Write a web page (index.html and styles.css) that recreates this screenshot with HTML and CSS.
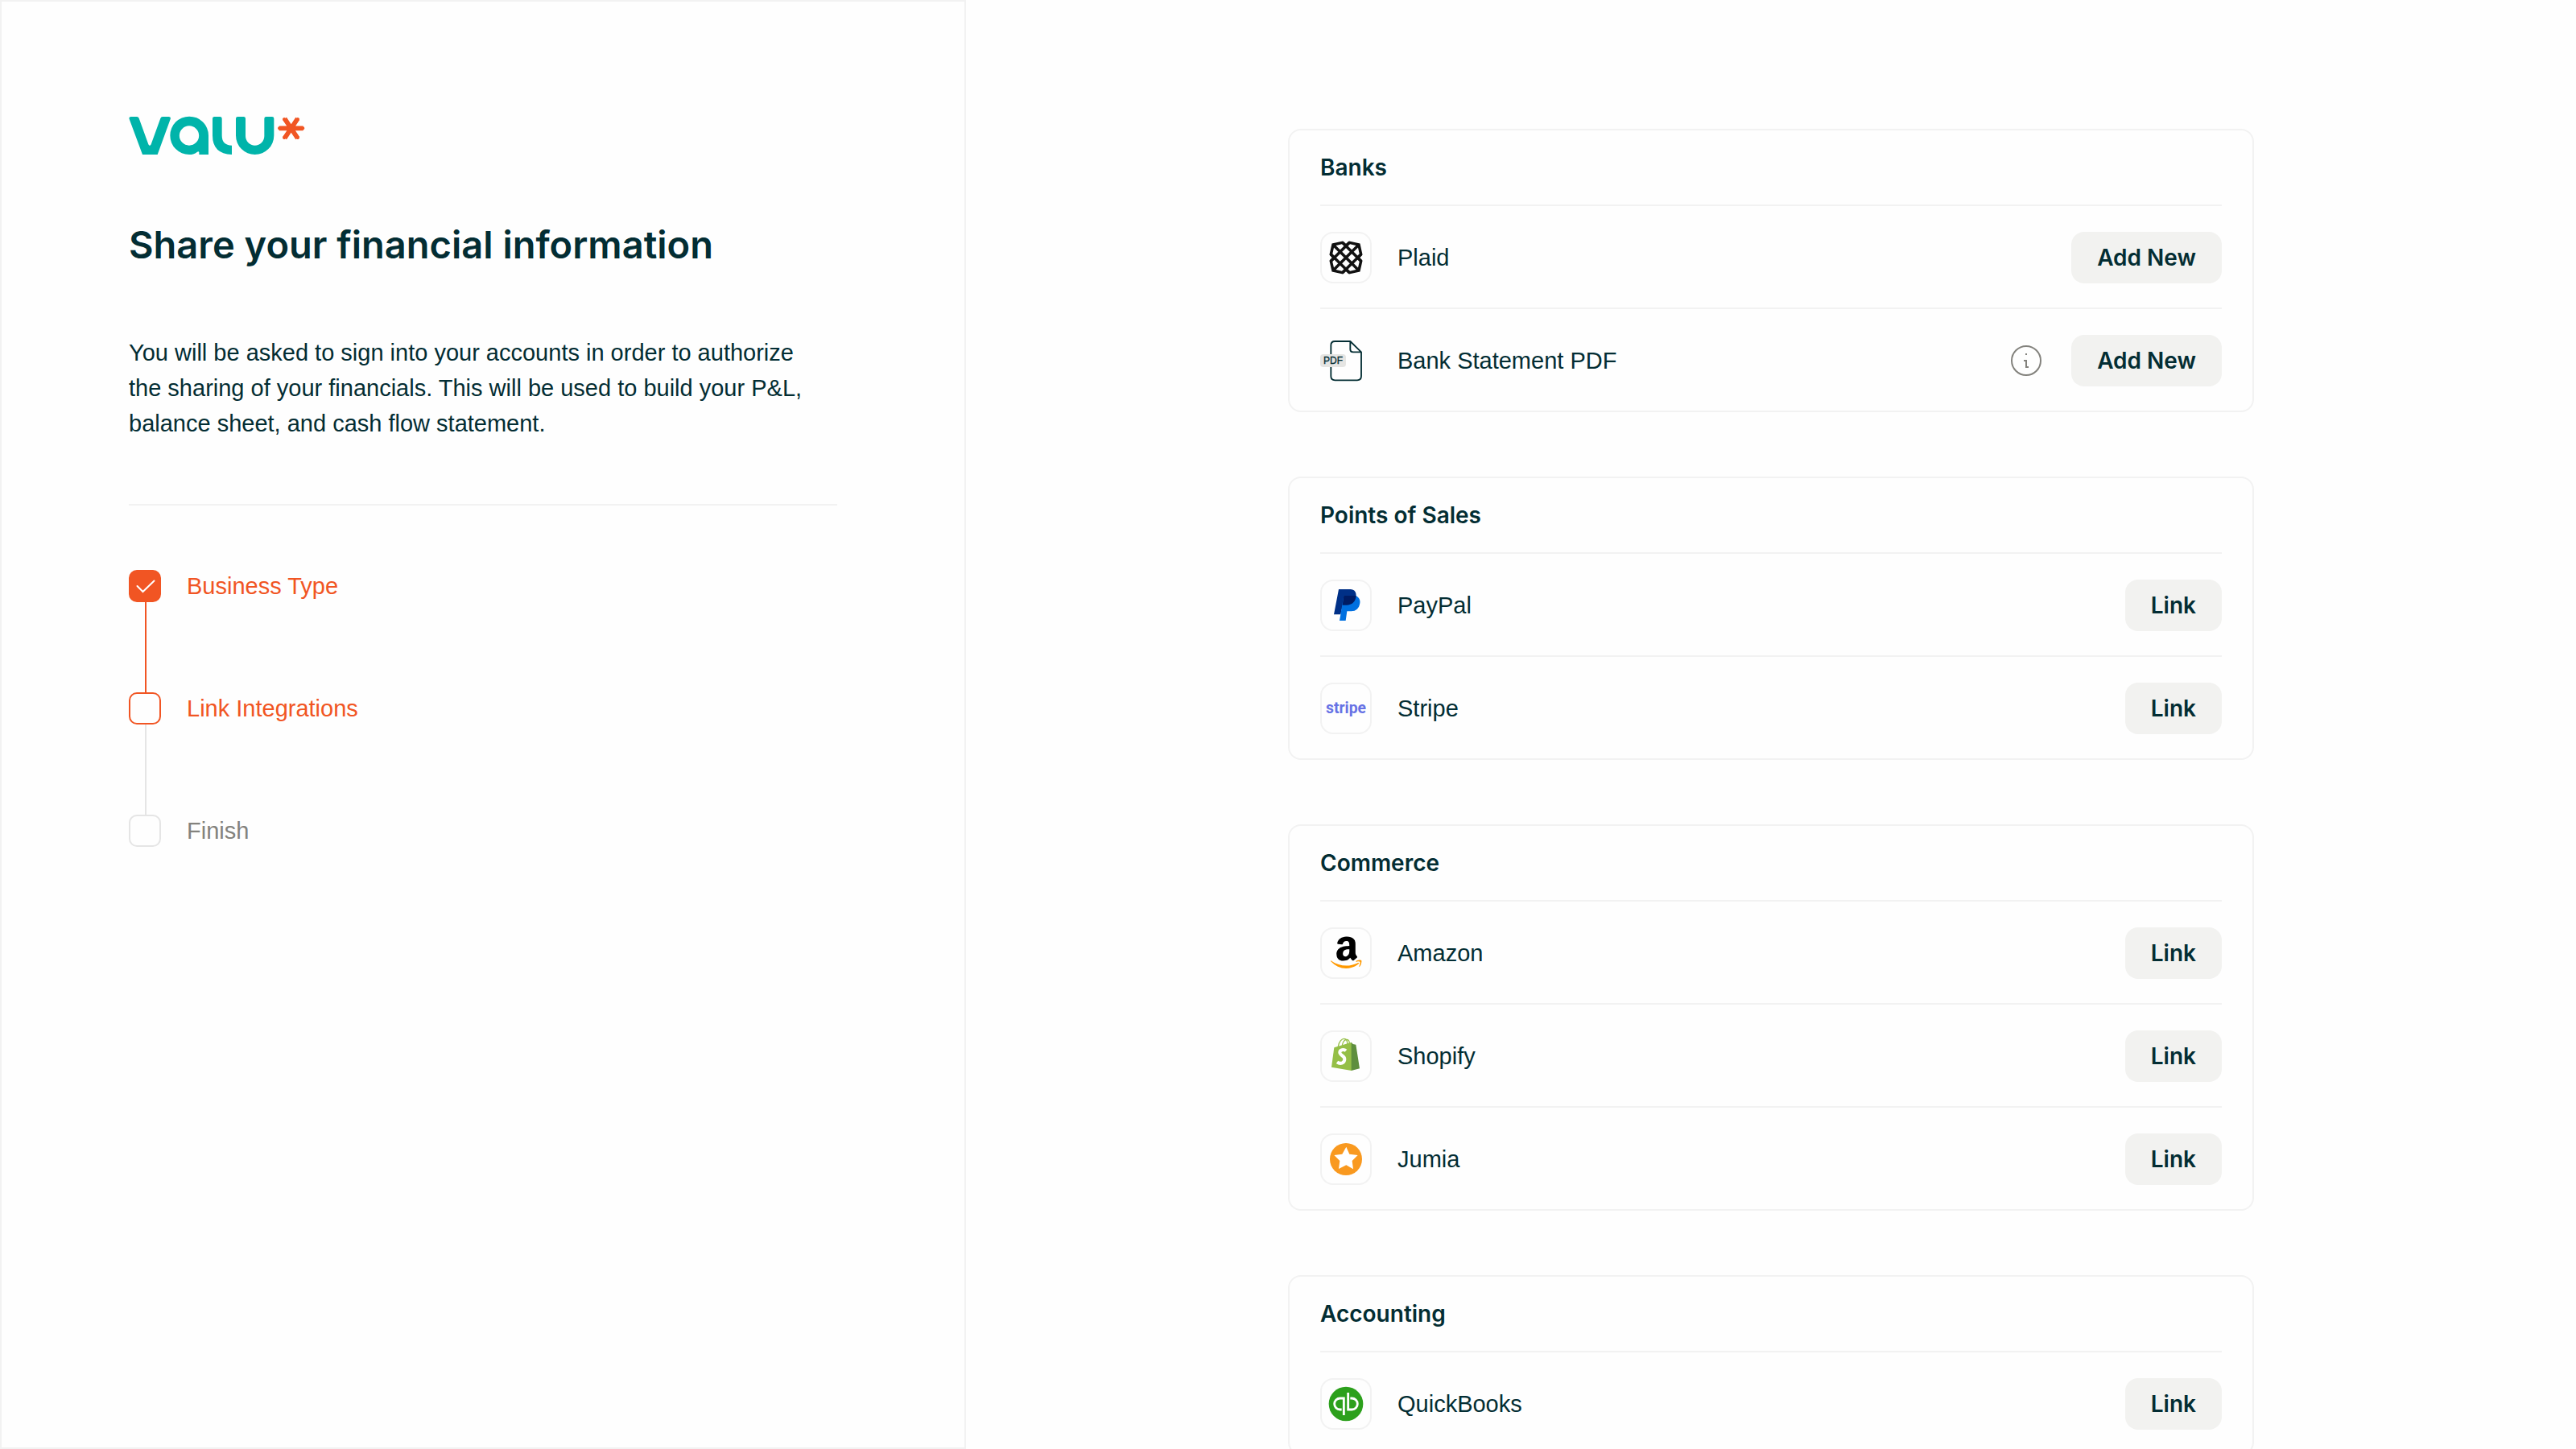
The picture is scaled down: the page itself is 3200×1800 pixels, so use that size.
FILE: index.html
```html
<!DOCTYPE html>
<html lang="en">
<head>
<meta charset="utf-8">
<title>Valu – Share your financial information</title>
<meta name="viewport" content="width=device-width, initial-scale=1">
<link rel="stylesheet" href="styles.css">
</head>
<body>
<div class="layout">
  <aside class="intro">
    <svg class="logo" viewBox="60 72 660 144" role="img" aria-label="Valu">
      <g fill="#00b4aa">
        <path d="M68 75H90Q96 75 98 81L133 178Q138 187 143 178L178 81Q180 75 186 75H209Q218 75 215 84L167 216H111L62 84Q59 75 68 75Z"/>
        <path fill-rule="evenodd" d="M285 74A71 71 0 0 1 357 145V216H322V208Q321 202 315 206Q304 216 285 216A71 71 0 0 1 285 74ZM285 109A36 36 0 0 0 285 182A36 36 0 0 0 285 109Z"/>
        <path d="M372 82Q372 75 379 75H400Q407 75 407 82V145Q407 182 444 182V216Q372 214 372 145Z"/>
        <path d="M459 82Q459 75 466 75H488Q495 75 495 82V147A35 35 0 0 0 565 147V82Q565 75 572 75H594Q601 75 601 82V145A71 71 0 0 1 459 145Z"/>
      </g>
      <g stroke="#f15523" stroke-width="17">
        <path d="M620 118H710M641 82L689 155M689 82L641 155" stroke-linecap="butt"/>
        <path d="M621 118H709M639 84L690 153M690 84L639 153" stroke-width="12" stroke-linecap="round"/>
      </g>
    </svg>
    <h1 class="title">Share your financial information</h1>
    <p class="lead">You will be asked to sign into your accounts in order to authorize the sharing of your financials. This will be used to build your P&amp;L, balance sheet, and cash flow statement.</p>
    <ol class="steps">
      <li class="step step-done">
        <input class="step-box" type="checkbox" id="step-type" checked>
        <label class="step-label" for="step-type">Business Type</label>
      </li>
      <li class="step step-current">
        <input class="step-box" type="checkbox" id="step-link">
        <label class="step-label" for="step-link">Link Integrations</label>
      </li>
      <li class="step">
        <input class="step-box" type="checkbox" id="step-finish">
        <label class="step-label" for="step-finish">Finish</label>
      </li>
    </ol>
  </aside>

  <main class="content">
    <section class="card">
      <h2 class="card-title">Banks</h2>
      <ul class="rows">
        <li class="row">
          <svg class="tile" viewBox="6 6 180 180" aria-hidden="true">
            <g fill="none" stroke="#111" stroke-width="10.5">
              <path d="M48 48L83 40L96 52L109 40L144 48L152 84L140 96L152 109L144 144L109 152L96 140L83 152L48 144L40 109L52 96L40 84Z"/>
              <path d="M48 48L144 144M144 48L48 144M83 40L152 109M109 40L40 109M40 84L109 152M152 84L83 152"/>
            </g>
          </svg>
          <span class="name">Plaid</span>
          <button class="btn" type="button">Add New</button>
        </li>
        <li class="row">
          <svg class="tile tile-plain" viewBox="0 0 192 192" aria-hidden="true">
            <path d="M112 24H55Q40 24 40 39V154Q40 169 55 169H138Q153 169 153 154V64ZM112 24V54Q112 64 122 64H153" fill="none" stroke="#032d33" stroke-width="5.5" stroke-linejoin="round"/>
            <rect x="0" y="72" width="96" height="48" rx="12" fill="#e5e5e3"/>
            <text class="pdf-text" x="12" y="109">PDF</text>
          </svg>
          <span class="name">Bank Statement PDF</span>
          <button class="info" type="button" aria-label="About bank statement PDFs">
            <svg viewBox="0 0 48 48" width="48" height="48" aria-hidden="true">
              <circle cx="24" cy="24" r="18" fill="none" stroke="#83827d" stroke-width="2"/>
              <path d="M23 15h2v2h-2zM21 23h4v8h2v2h-4v-8h-2z" fill="#83827d"/>
            </svg>
          </button>
          <button class="btn" type="button">Add New</button>
        </li>
      </ul>
    </section>

    <section class="card">
      <h2 class="card-title">Points of Sales</h2>
      <ul class="rows">
        <li class="row">
          <svg class="tile" viewBox="6 6 180 180" aria-hidden="true">
            <path d="M69 36H112C128 36 137 48 133 66C129 85 117 95 98 95H84L76 130H51Z" fill="#003087"/>
            <path d="M88 60H133C145 67 150 75 148 88C145 108 133 118 116 118H100L95 153H72Z" fill="#0070e0"/>
            <path d="M88 60H134C132 82 119 95 98 95H83Z" fill="#001c64"/>
          </svg>
          <span class="name">PayPal</span>
          <button class="btn" type="button">Link</button>
        </li>
        <li class="row">
          <svg class="tile" viewBox="6 6 180 180" aria-hidden="true">
            <text class="stripe-text" x="96" y="115" text-anchor="middle">stripe</text>
          </svg>
          <span class="name">Stripe</span>
          <button class="btn" type="button">Link</button>
        </li>
      </ul>
    </section>

    <section class="card">
      <h2 class="card-title">Commerce</h2>
      <ul class="rows">
        <li class="row">
          <svg class="tile" viewBox="6 6 180 180" aria-hidden="true">
            <path transform="translate(19 28) scale(6.3 6.1)" fill="#000" d="M6.61 11.802c0-1.005.247-1.863.743-2.577.495-.71 1.17-1.25 2.04-1.615.796-.335 1.756-.575 2.912-.72.39-.046 1.033-.103 1.92-.174v-.37c0-.93-.105-1.558-.3-1.875-.302-.43-.78-.65-1.44-.65h-.182c-.48.046-.896.196-1.246.46-.35.27-.575.63-.675 1.096-.06.3-.206.465-.435.51l-2.52-.315c-.248-.06-.372-.18-.372-.39 0-.046.007-.09.022-.15.247-1.29.855-2.25 1.82-2.88.976-.616 2.1-.975 3.39-1.05h.54c1.65 0 2.957.434 3.888 1.29.135.15.27.3.405.48.12.165.224.314.283.45.075.134.15.33.195.57.06.254.105.42.135.51.03.104.062.3.076.615.01.313.02.493.02.553v5.28c0 .376.06.72.165 1.036.105.313.21.54.315.674l.51.674c.09.136.136.256.136.36 0 .12-.06.226-.18.314-1.2 1.05-1.86 1.62-1.963 1.71-.165.135-.375.15-.63.045a6.062 6.062 0 01-.526-.496l-.31-.347a9.391 9.391 0 01-.317-.42l-.3-.435c-.81.886-1.603 1.44-2.4 1.665-.494.15-1.093.227-1.83.227-1.11 0-2.04-.343-2.76-1.034-.72-.69-1.08-1.665-1.08-2.94zm3.753-.438c0 .566.14 1.02.425 1.364.285.34.675.512 1.155.512.045 0 .106-.007.195-.02.09-.016.134-.023.166-.023.614-.16 1.08-.553 1.424-1.178.165-.28.285-.58.36-.91.09-.32.12-.59.135-.8.015-.195.015-.54.015-1.005v-.54c-.84 0-1.484.06-1.92.18-1.275.36-1.92 1.17-1.92 2.43z"/>
            <path transform="translate(39 20) scale(4.8 5.8)" fill="#f90" d="M.045 18.02c.072-.116.187-.124.348-.022 3.636 2.11 7.594 3.166 11.87 3.166 2.852 0 5.668-.533 8.447-1.595l.315-.14c.138-.06.234-.1.293-.13.226-.088.39-.046.525.13.12.174.09.336-.12.48-.256.19-.6.41-1.006.654-1.244.743-2.64 1.316-4.185 1.726a17.617 17.617 0 01-10.951-.577 17.88 17.88 0 01-5.43-3.35c-.1-.074-.151-.15-.151-.22 0-.047.021-.09.051-.13zM19.525 18.391c.03-.06.075-.11.132-.17.362-.243.714-.41 1.05-.5a8.094 8.094 0 011.612-.24c.14-.012.28 0 .41.03.65.06 1.05.168 1.172.33.063.09.099.228.099.39v.15c0 .51-.149 1.11-.424 1.8-.278.69-.664 1.248-1.156 1.68-.073.06-.14.09-.197.09-.03 0-.06 0-.09-.012-.09-.044-.107-.12-.064-.24.54-1.26.806-2.143.806-2.64 0-.15-.03-.27-.087-.344-.145-.166-.55-.257-1.224-.257-.243 0-.533.016-.87.046-.363.045-.7.09-1 .135-.09 0-.148-.014-.18-.044z"/>
          </svg>
          <span class="name">Amazon</span>
          <button class="btn" type="button">Link</button>
        </li>
        <li class="row">
          <svg class="tile" viewBox="6 6 180 180" aria-hidden="true">
            <path d="M67 60C70 42 80 31 89 31C98 31 102 40 101 52M82 56C84 42 92 33 100 34C107 35 109 41 109 49" fill="none" stroke="#95bf47" stroke-width="4"/>
            <path d="M52 64L117 44V150L42 137Z" fill="#95bf47"/>
            <path d="M116 44L122 51L133 53L147 142L116 150Z" fill="#5e8e3e"/>
            <path d="M96 76C88 69 73 72 73 82C73 94 92 94 91 108C90 122 75 127 63 118" fill="none" stroke="#fff" stroke-width="12"/>
          </svg>
          <span class="name">Shopify</span>
          <button class="btn" type="button">Link</button>
        </li>
        <li class="row">
          <svg class="tile" viewBox="6 6 180 180" aria-hidden="true">
            <circle cx="96" cy="96" r="60" fill="#f9991f"/>
            <path d="M97 50L109 77L140 81L119 102L123 133L97 118L69 132L73 102L52 81L82 77Z" fill="#fff"/>
          </svg>
          <span class="name">Jumia</span>
          <button class="btn" type="button">Link</button>
        </li>
      </ul>
    </section>

    <section class="card">
      <h2 class="card-title">Accounting</h2>
      <ul class="rows">
        <li class="row">
          <svg class="tile" viewBox="6 6 180 180" aria-hidden="true">
            <circle cx="96" cy="96" r="64" fill="#2ca01c"/>
            <path d="M80 117H74A21 21 0 0 1 74 75H88V138M112 75H118A21 21 0 0 1 118 117H104V54" fill="none" stroke="#fff" stroke-width="8.5"/>
          </svg>
          <span class="name">QuickBooks</span>
          <button class="btn" type="button">Link</button>
        </li>
      </ul>
    </section>
  </main>
</div>
</body>
</html>
```
FILE: styles.css
```css
:root {
  --ink: #032d33;
  --muted: #83827d;
  --line: #f2f2f2;
  --box-line: #e5e5e5;
  --accent: #f15523;
  --font: "Liberation Sans", Arial, sans-serif;
  --font-strong: Inter, "Liberation Sans", sans-serif;
}

* {
  box-sizing: border-box;
}

body {
  margin: 0;
  background: #fefefe;
  color: var(--ink);
  font-family: var(--font);
  font-size: 29px;
  line-height: 44px;
}

.layout {
  display: grid;
  grid-template-columns: 3fr 5fr;
  height: 100vh;
}

/* Left panel */
.intro {
  padding: 142px 158px;
  border: 2px solid var(--line);
}

.logo {
  display: block;
  width: 220px;
  height: 48px;
}

.title {
  margin: 80px 0 0;
  font-family: var(--font-strong);
  font-size: 47px;
  font-weight: 600;
  line-height: 64px;
}

.lead {
  margin: 80px 0 0;
  padding: 0 32px 78px 0;
  border-bottom: 2px solid var(--line);
}

.steps {
  display: flex;
  flex-direction: column;
  gap: 112px;
  margin: 80px 0 0;
  padding: 0;
  list-style: none;
}

.step {
  position: relative;
  display: flex;
  align-items: center;
  gap: 32px;
  height: 40px;
  color: var(--muted);
}

.step-done,
.step-current {
  color: var(--accent);
}

/* Connector down to the next step */
.step:not(:last-child)::after {
  content: "";
  position: absolute;
  top: 100%;
  left: 20px;
  width: 2px;
  height: 112px;
  background: var(--box-line);
}

.step-done:not(:last-child)::after {
  background: var(--accent);
}

.step-box {
  appearance: none;
  width: 40px;
  height: 40px;
  margin: 0;
  border: 2px solid var(--box-line);
  border-radius: 10px;
}

.step-current .step-box {
  border-color: var(--accent);
}

.step-box:checked {
  border-color: var(--accent);
  background: var(--accent) url("data:image/svg+xml,%3Csvg xmlns='http://www.w3.org/2000/svg' viewBox='0 0 36 36'%3E%3Cpath d='M8.500 18L15.500 25L29.500 11.500' fill='none' stroke='white' stroke-width='2' stroke-linecap='round'/%3E%3C/svg%3E") center / 36px no-repeat;
}

/* Integrations */
.content {
  display: flex;
  flex-direction: column;
  align-items: center;
  gap: 80px;
  padding: 160px 20%;
  overflow: hidden;
}

.card {
  flex: none;
  width: 100%;
  padding: 0 38px;
  border: 2px solid var(--line);
  border-radius: 16px;
}

.card-title {
  margin: 0;
  padding: 24px 0;
  font-family: var(--font-strong);
  font-size: 28px;
  font-weight: 600;
  line-height: 44px;
}

.rows {
  margin: 0;
  padding: 0;
  list-style: none;
}

.row {
  display: flex;
  align-items: center;
  gap: 32px;
  padding: 32px 0 30px;
  border-top: 2px solid var(--line);
}

.tile {
  flex: none;
  width: 64px;
  height: 64px;
  border: 2px solid var(--line);
  border-radius: 16px;
}

.tile-plain {
  border: 0;
  border-radius: 0;
}

.name {
  flex: 1;
}

.info {
  display: flex;
  padding: 0;
  border: 0;
  background: none;
}

.btn {
  height: 64px;
  padding: 0 32px;
  border: 0;
  border-radius: 16px;
  background: #f2f2f0;
  color: var(--ink);
  font-family: var(--font-strong);
  font-size: 28px;
  font-weight: 600;
}

.pdf-text {
  font-size: 36px;
  fill: var(--ink);
  stroke: var(--ink);
  stroke-width: 1px;
}

.stripe-text {
  font-family: Roboto, sans-serif;
  font-size: 58px;
  font-weight: 700;
  fill: #6772e5;
}
```
